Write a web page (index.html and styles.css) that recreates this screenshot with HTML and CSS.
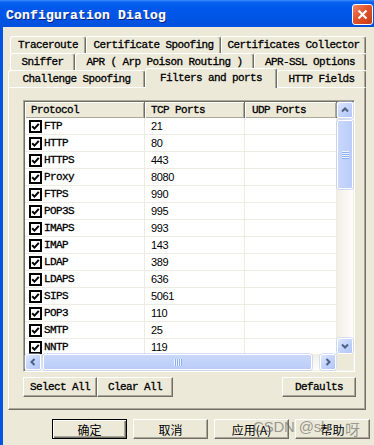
FILE: index.html
```html
<!DOCTYPE html>
<html lang="en">
<head>
    <meta charset="UTF-8">
    <title>Configuration Dialog</title>
    <link rel="stylesheet" href="styles.css">
</head>
<body>

<div class="window">
    <div class="titlebar">
        <span class="title">Configuration Dialog</span>
        <span class="close">
            <svg width="11" height="11" viewBox="0 0 11 11"><path d="M1.5 1.5 L9.5 9.5 M9.5 1.5 L1.5 9.5" stroke="#fff" stroke-width="2.2" fill="none"/></svg>
        </span>
    </div>

    <div class="body">
        <!-- tab strip, three rows -->
        <div class="tabs">
            <div class="tab-row offset">
                <div class="tab" style="width:76px">Traceroute</div>
                <div class="tab" style="width:135px">Certificate Spoofing</div>
                <div class="tab" style="width:145px">Certificates Collector</div>
            </div>
            <div class="tab-row offset">
                <div class="tab" style="width:65px">Sniffer</div>
                <div class="tab" style="width:179px">APR ( Arp Poison Routing )</div>
                <div class="tab" style="width:112px">APR-SSL Options</div>
            </div>
            <div class="tab-row">
                <div class="tab" style="width:137px">Challenge Spoofing</div>
                <div class="tab active" style="width:132px">Filters and ports</div>
                <div class="tab" style="width:89px">HTTP Fields</div>
            </div>
        </div>

        <div class="panel">
            <div class="list">
                <div class="view">
                    <div class="list-head">
                        <div class="hcell">Protocol</div>
                        <div class="hcell">TCP Ports</div>
                        <div class="hcell">UDP Ports</div>
                    </div>
                    <div id="rows"></div>
                </div>

                <div class="vscroll">
                    <div class="sb-btn">
                        <svg width="8" height="8" viewBox="0 0 8 8"><path d="M1 5.5 L4 2.5 L7 5.5" stroke="#4D6185" stroke-width="2" fill="none"/></svg>
                    </div>
                    <div class="thumb vthumb"><span class="grip-v"></span></div>
                    <div class="sb-btn down">
                        <svg width="8" height="8" viewBox="0 0 8 8"><path d="M1 2.5 L4 5.5 L7 2.5" stroke="#4D6185" stroke-width="2" fill="none"/></svg>
                    </div>
                </div>

                <div class="hscroll">
                    <div class="sb-btn">
                        <svg width="8" height="8" viewBox="0 0 8 8"><path d="M5.5 1 L2.5 4 L5.5 7" stroke="#4D6185" stroke-width="2" fill="none"/></svg>
                    </div>
                    <div class="thumb hthumb"><span class="grip-h"></span></div>
                    <div class="sb-btn right">
                        <svg width="8" height="8" viewBox="0 0 8 8"><path d="M2.5 1 L5.5 4 L2.5 7" stroke="#4D6185" stroke-width="2" fill="none"/></svg>
                    </div>
                </div>

                <div class="corner"></div>
            </div>

            <div class="panel-buttons">
                <div class="btn" style="width:74px">Select All</div>
                <div class="btn" style="width:76px">Clear All</div>
                <div class="btn push-right" style="width:74px">Defaults</div>
            </div>
        </div>

        <div class="dialog-buttons">
            <div class="btn cjk default">确定</div>
            <div class="btn cjk">取消</div>
            <div class="btn cjk">应用(A)</div>
            <div class="btn cjk">帮助</div>
        </div>
    </div>

    <div class="watermark">
        <span class="wm-name">CSDN @sl</span>
        <span>呀</span>
    </div>
</div>

<script>
    const ports = [
        ["FTP", "21"], ["HTTP", "80"], ["HTTPS", "443"], ["Proxy", "8080"],
        ["FTPS", "990"], ["POP3S", "995"], ["IMAPS", "993"], ["IMAP", "143"],
        ["LDAP", "389"], ["LDAPS", "636"], ["SIPS", "5061"], ["POP3", "110"],
        ["SMTP", "25"], ["NNTP", "119"]
    ];

    const rows = document.getElementById("rows");
    const check = '<svg width="9" height="9" viewBox="0 0 9 9"><path d="M1.2 4.2 L3.5 6.6 L7.8 1.8" stroke="#000" stroke-width="2" fill="none"/></svg>';

    ports.forEach(([name, tcp]) => {
        const row = document.createElement("div");
        row.className = "list-row";
        row.innerHTML =
            '<div class="cell proto"><span class="checkbox">' + check + '</span>' + name + '</div>' +
            '<div class="cell num">' + tcp + '</div>' +
            '<div class="cell"></div>';
        rows.appendChild(row);
    });
</script>

</body>
</html>
```

FILE: styles.css
```css
* {
    margin: 0;
    padding: 0;
    box-sizing: border-box;
}

body {
    width: 374px;
    height: 445px;
    overflow: hidden;
    background: #ECE9D8;
    color: #000;
    font-family: "Liberation Mono", "DejaVu Sans Mono", monospace;
    font-size: 11px;
    letter-spacing: -0.6px;
    -webkit-text-stroke: 0.3px #000;
}

/* Window frame */
.window {
    position: relative;
    width: 374px;
    height: 445px;
    display: flex;
    flex-direction: column;
}

.titlebar {
    height: 27px;
    display: flex;
    align-items: center;
    justify-content: space-between;
    padding: 0 1px 0 6px;
    background: linear-gradient(#3D8DFB 0, #0A62F0 2px, #0058EB 8px, #0054E3 20px, #0050DA 100%);
}

.title {
    padding-top: 3px;
    color: #fff;
    font-weight: bold;
    font-size: 13px;
    letter-spacing: 0.2px;
    -webkit-text-stroke: 0.2px #fff;
    text-shadow: 1px 1px #0A1E7A;
}

.close {
    width: 21px;
    height: 21px;
    margin-top: 1px;
    border: 1px solid #fff;
    border-radius: 3px;
    background: linear-gradient(135deg, #F08A66, #E2532B 45%, #C73C16);
    display: flex;
    align-items: center;
    justify-content: center;
}

.body {
    flex: 1;
    border-left: 3px solid #0054E3;
    padding-top: 9px;
}

/* Tabs */
.tabs {
    margin-left: 5px;
}

.tab-row {
    display: flex;
    height: 17px;
    align-items: flex-start;
}

.tab-row.offset {
    margin-left: 2px;
}

.tab {
    height: 17px;
    border: 1px solid;
    border-color: #fff #716F64 transparent #fff;
    border-bottom: none;
    border-radius: 3px 3px 0 0;
    box-shadow: inset -1px 0 #ACA899;
    background: #ECE9D8;
    display: flex;
    align-items: center;
    justify-content: center;
    white-space: nowrap;
}

.tab.active {
    position: relative;
    z-index: 1;
    height: 20px;
    margin-top: -2px;
    padding-bottom: 2px;
}

/* Tab page */
.panel {
    width: 358px;
    height: 323px;
    margin-left: 5px;
    border: 1px solid;
    border-color: #fff #716F64 #716F64 #fff;
    box-shadow: inset -1px -1px #ACA899;
    padding: 12px 10px 0 14px;
}

.list {
    width: 332px;
    height: 272px;
    border: 1px solid;
    border-color: #ACA899 #fff #fff #ACA899;
    padding: 1px;
    box-shadow: inset 1px 1px #716F64, inset -1px -1px #F1EFE2;
    display: grid;
    grid-template-columns: 312px 16px;
    grid-template-rows: 252px 16px;
}

.view {
    background: #fff;
    overflow: hidden;
}

.list-head,
.list-row {
    display: grid;
    grid-template-columns: 120px 100px 92px;
}

.list-head {
    height: 16px;
    background: #ECE9D8;
}

.hcell {
    display: flex;
    align-items: center;
    padding-left: 6px;
    border-right: 1px solid #716F64;
    box-shadow: inset 1px 1px #fff, inset -1px -1px #ACA899;
}

.hcell:last-child {
    padding-left: 7px;
}

.list-row {
    height: 17px;
}

.cell {
    display: flex;
    align-items: center;
    padding-left: 6px;
    border-right: 1px solid #EDEBE2;
    border-bottom: 1px solid #EDEBE2;
}

.cell.proto {
    padding-left: 4px;
}

.cell.num {
    font-family: "Liberation Sans", Arial, sans-serif;
    font-size: 11px;
    letter-spacing: -0.4px;
    -webkit-text-stroke: 0;
}

.checkbox {
    width: 13px;
    height: 13px;
    margin-right: 2px;
    border: 2px solid #000;
    background: #fff;
    display: flex;
    align-items: center;
    justify-content: center;
}

/* Scrollbars */
.vscroll {
    display: flex;
    flex-direction: column;
    background: linear-gradient(90deg, #F1EFE7, #FDFDFA);
}

.hscroll {
    display: flex;
    background: linear-gradient(#F1EFE7, #FDFDFA);
}

.sb-btn {
    width: 16px;
    height: 16px;
    border: 1px solid #fff;
    border-radius: 2px;
    background: linear-gradient(135deg, #DDE7FE, #C3D3FB 50%, #B2C6F5);
    box-shadow: 0 0 0 0.5px #B5C8F4;
    display: flex;
    align-items: center;
    justify-content: center;
    flex-shrink: 0;
}

.vscroll .down {
    margin-top: auto;
}

.hscroll .right {
    margin-left: auto;
    margin-right: 1px;
}

.thumb {
    border: 1px solid #fff;
    border-radius: 2px;
    background: linear-gradient(90deg, #C9D8FC, #BACCF8);
    box-shadow: 0 0 0 0.5px #A9BFF1;
    display: flex;
    align-items: center;
    justify-content: center;
}

.vthumb {
    margin-top: 2px;
    height: 69px;
}

.hthumb {
    margin-left: 2px;
    width: 269px;
    background: linear-gradient(#C9D8FC, #BACCF8);
}

.grip-v {
    width: 7px;
    height: 8px;
    background: repeating-linear-gradient(#EEF4FE 0 1px, #8CAEF5 1px 2px);
}

.grip-h {
    width: 8px;
    height: 7px;
    background: repeating-linear-gradient(90deg, #EEF4FE 0 1px, #8CAEF5 1px 2px);
}

.corner {
    background: #ECE9D8;
}

/* Buttons */
.btn {
    height: 20px;
    background: #ECE9D8;
    border: 1px solid;
    border-color: #fff #716F64 #716F64 #fff;
    box-shadow: inset -1px -1px #ACA899;
    display: flex;
    align-items: center;
    justify-content: center;
    white-space: nowrap;
}

.panel-buttons {
    display: flex;
    margin-top: 5px;
}

.push-right {
    margin-left: auto;
    margin-right: -1px;
}

.dialog-buttons {
    display: flex;
    gap: 6px;
    margin: 9px 0 0 49px;
}

.dialog-buttons .btn {
    width: 75px;
}

.cjk {
    font-family: "Noto Sans CJK SC", sans-serif;
    font-size: 12px;
    letter-spacing: 0;
    -webkit-text-stroke: 0;
}

.btn.default {
    border-color: #000;
    box-shadow: inset 1px 1px #fff, inset -1px -1px #716F64, inset -2px -2px #ACA899;
}

/* Watermark over the dialog buttons */
.watermark {
    position: absolute;
    left: 253px;
    top: 418px;
    display: flex;
    color: rgba(105, 105, 105, 0.65);
    font-family: "Liberation Sans", "Noto Sans CJK SC", sans-serif;
    font-size: 15px;
    letter-spacing: -0.2px;
    -webkit-text-stroke: 0;
}

.wm-name {
    width: 92px;
}
```
